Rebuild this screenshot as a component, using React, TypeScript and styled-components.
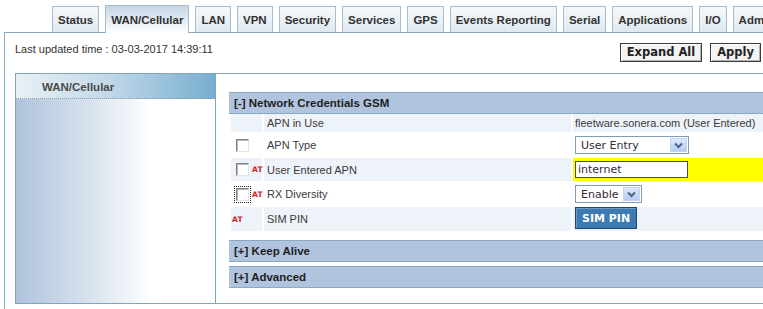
import React from "react";
import styled, { createGlobalStyle, css } from "styled-components";

const GlobalStyle = createGlobalStyle`
  html, body { margin: 0; padding: 0; overflow: hidden; background: #fff; }
  body { font-family: "Liberation Sans", Arial, sans-serif; color: #333; }
  * { box-sizing: border-box; }
`;

const Page = styled.div`
  width: 763px;
  height: 309px;
  padding: 5px 0 0 4px;
  overflow: hidden;
  display: flex;
  flex-direction: column;
`;

const TabBar = styled.div`
  display: flex;
  align-items: flex-end;
  gap: 6px;
  height: 27px;
  padding-left: 48px;
  white-space: nowrap;
`;

const Tab = styled.div<{ $active?: boolean }>`
  flex-shrink: 0;
  display: flex;
  align-items: center;
  height: 26px;
  padding: 1px 5px 0;
  border: 1px solid #a6bdcf;
  border-bottom: none;
  font-weight: bold;
  font-size: 11.5px;
  color: #333;
  background: linear-gradient(#f6f9fb, #dfe8f0);
  ${(p) =>
    p.$active &&
    css`
      height: 28px;
      margin-bottom: -1px;
      position: relative;
      z-index: 1;
      background: linear-gradient(#c3d5e5, #eef3f8 70%, #ffffff);
    `}
`;

const Panel = styled.div`
  flex: 1;
  border-top: 1px solid #88abc3;
  border-left: 1px solid #88abc3;
  padding-left: 10px;
`;

const TopBar = styled.div`
  height: 40px;
  padding: 9px 2px 0 0;
  display: flex;
  justify-content: space-between;
  align-items: flex-start;
`;

const Updated = styled.div`
  font-size: 11px;
  line-height: 14px;
  color: #333;
`;

const ButtonGroup = styled.div`
  display: flex;
  gap: 8px;
  margin-top: 1px;
`;

const ActionButton = styled.button`
  height: 19px;
  padding: 0 6px;
  font-family: "DejaVu Sans", Verdana, sans-serif;
  font-weight: bold;
  font-size: 11.5px;
  color: #222;
  background: #f3f3f3;
  border: 1px solid #3c3c3c;
  box-shadow: inset 1px 1px 0 #ffffff, inset -1px -1px 0 #b4b4b4;
  line-height: 15px;
`;

const Frame = styled.div`
  width: 800px;
  height: 231px;
  display: flex;
  border-top: 1px solid #7fa6bf;
  border-bottom: 1px solid #7fa6bf;
`;

const Sidebar = styled.div`
  width: 201px;
  flex-shrink: 0;
  border-left: 1px solid #7fa6bf;
  border-right: 1px solid #7fa6bf;
  display: flex;
  flex-direction: column;
`;

const SidebarHeader = styled.div`
  height: 25px;
  padding: 1px 0 0 26px;
  display: flex;
  align-items: center;
  font-weight: bold;
  font-size: 11.5px;
  color: #4a4a4a;
  border-bottom: 1px dotted #8a9aa6;
  background: linear-gradient(to right, #e8f0f4 0%, #c3d9e8 45%, #77aed1 100%);
`;

const SidebarBody = styled.div`
  flex: 1;
  background: linear-gradient(to right, #afc3dc 0%, #dbe5ef 40%, #ffffff 68%);
`;

const Content = styled.div`
  flex: 1;
  padding: 18px 0 0 13px;
  display: flex;
  flex-direction: column;
`;

const SectionHeader = styled.div<{ $gap?: number }>`
  height: 22px;
  margin-top: ${(p) => p.$gap ?? 0}px;
  padding-left: 5px;
  display: flex;
  align-items: center;
  font-weight: bold;
  font-size: 11.5px;
  color: #1e1e1e;
  background: #b0c4de;
  border-top: 1px solid #88a8c6;
  border-bottom: 1px solid #88a8c6;
`;

const Table = styled.div`
  display: flex;
  flex-direction: column;
  margin-left: 2px;
`;

const Row = styled.div<{ $h: number }>`
  display: grid;
  grid-template-columns: 31px 307px 1fr;
  column-gap: 2px;
  height: ${(p) => p.$h}px;
`;

const Cell = styled.div<{ $shade?: boolean; $hl?: boolean }>`
  display: flex;
  align-items: center;
  font-size: 11px;
  color: #3a3a3a;
  background: ${(p) => (p.$hl ? "#ffff00" : p.$shade ? "#eef2f9" : "#ffffff")};
`;

const FlagCell = styled(Cell)<{ $pad?: number }>`
  padding-left: ${(p) => p.$pad ?? 5}px;
  gap: 3px;
`;

const LabelCell = styled(Cell)`
  padding-left: 3px;
`;

const ValueCell = styled(Cell)`
  padding-left: 2px;
`;

const Check = styled.span<{ $focus?: boolean }>`
  width: 13px;
  height: 13px;
  flex-shrink: 0;
  background: #fff;
  border-top: 1px solid #808080;
  border-left: 1px solid #808080;
  border-bottom: 1px solid #e4e4e4;
  border-right: 1px solid #e4e4e4;
  box-shadow: inset 1px 1px 0 #b8b8b8;
  ${(p) =>
    p.$focus &&
    css`
      outline: 1px dotted #222;
      outline-offset: 1px;
    `}
`;

const At = styled.span`
  font-family: "DejaVu Sans", Verdana, sans-serif;
  font-size: 7.5px;
  font-weight: bold;
  color: #d21a2a;
  letter-spacing: 0.2px;
`;

const SelectBox = styled.div<{ $w: number }>`
  width: ${(p) => p.$w}px;
  height: 18px;
  border: 1px solid #7f9db9;
  background: #fff;
  display: flex;
  align-items: center;
  justify-content: space-between;
  padding: 1px;
`;

const SelectText = styled.span`
  padding-left: 4px;
  font-family: "DejaVu Sans", Verdana, sans-serif;
  font-size: 11px;
  color: #36283a;
`;

const SelectArrow = styled.span`
  width: 17px;
  height: 14px;
  display: flex;
  align-items: center;
  justify-content: center;
  background: linear-gradient(#dde8fc, #b6cbf3);
  border: 1px solid #c3d3f3;
`;

const TextBox = styled.div`
  width: 113px;
  height: 17px;
  border: 1px solid #4c4c4c;
  padding-left: 2px;
  display: flex;
  align-items: center;
  font-family: "DejaVu Sans", Verdana, sans-serif;
  font-size: 11px;
  color: #36283a;
  background: #fff;
`;

const PinButton = styled.button`
  height: 22px;
  padding: 0 6px;
  align-self: flex-start;
  font-family: "DejaVu Sans", Verdana, sans-serif;
  font-weight: bold;
  font-size: 11px;
  color: #fff;
  background: #3d7ab2;
  border: 1px solid #23466a;
  box-shadow: inset 1px 1px 0 #6a9ccb;
`;

const Chevron = () => (
  <svg width="9" height="7" viewBox="0 0 9 7">
    <polyline points="1,1.5 4.5,5 8,1.5" fill="none" stroke="#4d6185" strokeWidth="2" />
  </svg>
);

const Select = ({ w, value }: { w: number; value: string }) => (
  <SelectBox $w={w}>
    <SelectText>{value}</SelectText>
    <SelectArrow>
      <Chevron />
    </SelectArrow>
  </SelectBox>
);

const tabs = [
  "Status",
  "WAN/Cellular",
  "LAN",
  "VPN",
  "Security",
  "Services",
  "GPS",
  "Events Reporting",
  "Serial",
  "Applications",
  "I/O",
  "Admin",
];

export default function App() {
  return (
    <>
      <GlobalStyle />
      <Page>
        <TabBar>
          {tabs.map((t) => (
            <Tab key={t} $active={t === "WAN/Cellular"}>
              {t}
            </Tab>
          ))}
        </TabBar>
        <Panel>
          <TopBar>
            <Updated>Last updated time : 03-03-2017 14:39:11</Updated>
            <ButtonGroup>
              <ActionButton>Expand All</ActionButton>
              <ActionButton>Apply</ActionButton>
            </ButtonGroup>
          </TopBar>
          <Frame>
            <Sidebar>
              <SidebarHeader>WAN/Cellular</SidebarHeader>
              <SidebarBody />
            </Sidebar>
            <Content>
              <SectionHeader>[-] Network Credentials GSM</SectionHeader>
              <Table>
                <Row $h={18}>
                  <FlagCell $shade />
                  <LabelCell $shade>APN in Use</LabelCell>
                  <ValueCell $shade>fleetware.sonera.com (User Entered)</ValueCell>
                </Row>
                <Row $h={26}>
                  <FlagCell>
                    <Check />
                  </FlagCell>
                  <LabelCell>APN Type</LabelCell>
                  <ValueCell>
                    <Select w={114} value="User Entry" />
                  </ValueCell>
                </Row>
                <Row $h={23}>
                  <FlagCell $shade>
                    <Check />
                    <At>AT</At>
                  </FlagCell>
                  <LabelCell $shade>User Entered APN</LabelCell>
                  <ValueCell $hl>
                    <TextBox>internet</TextBox>
                  </ValueCell>
                </Row>
                <Row $h={26}>
                  <FlagCell>
                    <Check $focus />
                    <At>AT</At>
                  </FlagCell>
                  <LabelCell>RX Diversity</LabelCell>
                  <ValueCell>
                    <Select w={67} value="Enable" />
                  </ValueCell>
                </Row>
                <Row $h={24}>
                  <FlagCell $shade $pad={1}>
                    <At>AT</At>
                  </FlagCell>
                  <LabelCell $shade>SIM PIN</LabelCell>
                  <ValueCell $shade>
                    <PinButton>SIM PIN</PinButton>
                  </ValueCell>
                </Row>
              </Table>
              <SectionHeader $gap={9}>[+] Keep Alive</SectionHeader>
              <SectionHeader $gap={4}>[+] Advanced</SectionHeader>
            </Content>
          </Frame>
        </Panel>
      </Page>
    </>
  );
}
